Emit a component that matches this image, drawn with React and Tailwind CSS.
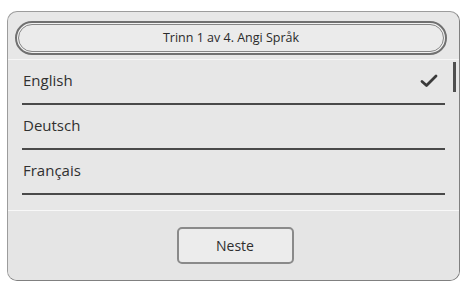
import React from "react";

const languages = [
  { name: "English", selected: true },
  { name: "Deutsch", selected: false },
  { name: "Français", selected: false },
];

const Check = () => (
  <svg width="18" height="14" viewBox="0 0 18 14" className="text-[#3a3a3a]">
    <path d="M2 7.5 L6.5 11.5 L16 2" fill="none" stroke="currentColor" strokeWidth="2.8" strokeLinejoin="round" strokeLinecap="round" />
  </svg>
);

const App = () => {
  return (
    <div
      className="w-[462px] h-[284px] bg-white pt-[11px] pl-[7px]"
      style={{ fontFamily: '"Open Sans", "Noto Sans", sans-serif' }}
    >
      <div className="relative w-[453px] h-[270px] rounded-[10px] border border-[#9c9c9c] border-r-[#808080] border-b-[#808080] bg-[#e7e7e7] flex flex-col overflow-hidden">
        {/* Header */}
        <div className="h-[48px] pt-[9px] px-[7px] border-b border-[#f6f6f6]">
          <div className="h-[34px] w-[432px] rounded-full border-2 border-[#707070] p-[1px] bg-[#f2f2f2]">
            <div className="h-full rounded-full border border-[#858585] bg-[#ebebeb] flex items-center justify-center text-[12.5px] text-[#2a2a2a]">
              Trinn 1 av 4. Angi Språk
            </div>
          </div>
        </div>

        {/* Language list */}
        <div className="relative h-[150px] pl-[14px] pr-[14px]">
          {languages.map((lang) => (
            <div
              key={lang.name}
              className="h-[45px] flex items-center justify-between border-b-2 border-[#4a4a4a] pl-[1px] pr-[7px] pb-[2px]"
            >
              <span className="text-[15px] text-[#303030]">{lang.name}</span>
              {lang.selected && <Check />}
            </div>
          ))}
          {/* scroll indicator */}
          <div className="absolute right-[3px] top-[2px] w-[3px] h-[30px] bg-[#4f4f4f]" />
        </div>

        {/* Footer */}
        <div className="flex-1 border-t border-[#f8f8f8] bg-[#e5e5e5] flex justify-center pt-[16px] pl-[3px]">
          <button className="w-[117px] h-[37px] rounded-[5px] border-2 border-[#8a8a8a] bg-[#ececec] text-[14px] text-[#2e2e2e]">
            Neste
          </button>
        </div>
      </div>
    </div>
  );
};

export default App;
